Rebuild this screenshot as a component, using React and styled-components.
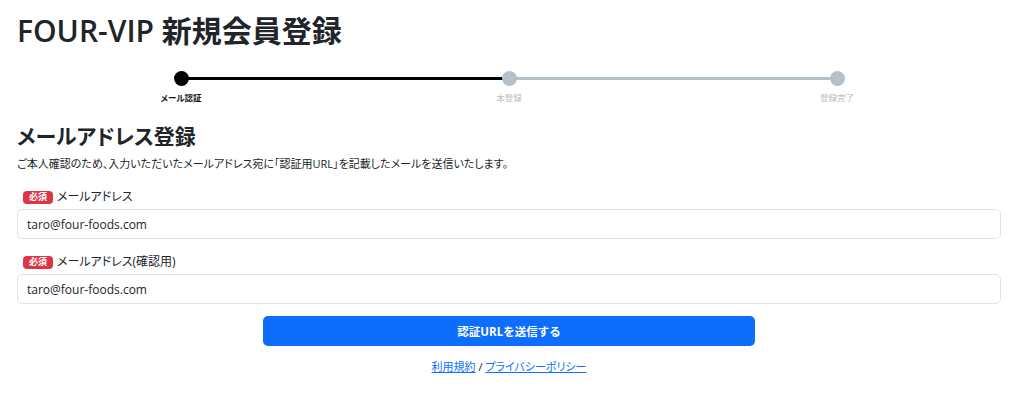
import React from "react";
import styled, { createGlobalStyle } from "styled-components";

const GlobalStyle = createGlobalStyle`
  body {
    margin: 0;
    background: #fff;
    color: #212529;
    font-family: "Open Sans", "Noto Sans CJK JP", sans-serif;
  }
`;

const Page = styled.div`
  width: 984px;
  padding: 0 0 0 17px;
  font-feature-settings: "palt";
`;

const Title = styled.h1`
  margin: 0;
  padding-top: 13px;
  font-size: 30px;
  font-weight: 600;
  line-height: 36px;
  color: #212529;
`;

const Stepper = styled.div`
  display: grid;
  grid-template-columns: repeat(3, 1fr);
  margin-top: 22px;
`;

const Step = styled.div`
  position: relative;
  display: flex;
  flex-direction: column;
  align-items: center;
`;

const Line = styled.div`
  position: absolute;
  top: 6px;
  left: 50%;
  width: 100%;
  height: 3px;
  background: ${p => (p.$done ? "#000" : "#b6c0c8")};
`;

const Dot = styled.div`
  position: relative;
  width: 15px;
  height: 15px;
  border-radius: 50%;
  background: ${p => (p.$active ? "#000" : "#b6c0c8")};
`;

const StepLabel = styled.div`
  margin-top: 6px;
  font-size: 8.5px;
  line-height: 12px;
  font-weight: ${p => (p.$active ? 700 : 400)};
  color: ${p => (p.$active ? "#111" : "#b6bcc2")};
`;

const Heading = styled.h2`
  margin: 17px 0 0;
  font-size: 21px;
  line-height: 30px;
  font-weight: 700;
`;

const Lead = styled.p`
  margin: 4px 0 0;
  font-size: 11px;
  line-height: 18px;
`;

const Field = styled.div`
  margin-top: ${p => p.$gap}px;
`;

const LabelRow = styled.div`
  display: flex;
  align-items: center;
  gap: 4px;
  padding-left: 6px;
  font-size: 12px;
  line-height: 18px;
`;

const Badge = styled.span`
  display: inline-flex;
  align-items: center;
  justify-content: center;
  width: 30px;
  height: 13px;
  border-radius: 4px;
  background: #dc3545;
  color: #fff;
  font-size: 9px;
  font-weight: 700;
`;

const Input = styled.input`
  box-sizing: border-box;
  display: block;
  width: 100%;
  height: 30px;
  margin-top: 3px;
  padding: 0 9px;
  border: 1px solid #dee2e6;
  border-radius: 5px;
  font-family: "Open Sans", "Noto Sans CJK JP", sans-serif;
  font-size: 12px;
  color: #212529;
  outline: none;
`;

const Actions = styled.div`
  display: flex;
  flex-direction: column;
  align-items: center;
  margin-top: 12px;
`;

const Submit = styled.button`
  width: 492px;
  height: 30px;
  border: 0;
  border-radius: 5px;
  background: #0d6efd;
  color: #fff;
  font-family: inherit;
  font-size: 11.5px;
  font-weight: 700;
`;

const Links = styled.div`
  margin-top: 12px;
  font-size: 11px;
  line-height: 18px;
  color: #212529;

  a {
    color: #0d6efd;
    text-decoration: underline;
  }
`;

const steps = [
  { label: "メール認証", active: true, done: true },
  { label: "本登録" },
  { label: "登録完了" }
];

const App = () => {
  return (
    <Page>
      <GlobalStyle />
      <Title>FOUR-VIP 新規会員登録</Title>
      <Stepper>
        {steps.map((s, i) => (
          <Step key={s.label}>
            {i < steps.length - 1 && <Line $done={s.done} />}
            <Dot $active={s.active} />
            <StepLabel $active={s.active}>{s.label}</StepLabel>
          </Step>
        ))}
      </Stepper>
      <Heading>メールアドレス登録</Heading>
      <Lead>
        ご本人確認のため、入力いただいたメールアドレス宛に「認証用URL」を記載したメールを送信いたします。
      </Lead>
      <Field $gap={15}>
        <LabelRow>
          <Badge>必須</Badge>
          メールアドレス
        </LabelRow>
        <Input defaultValue="taro@four-foods.com" />
      </Field>
      <Field $gap={14}>
        <LabelRow>
          <Badge>必須</Badge>
          メールアドレス(確認用)
        </LabelRow>
        <Input defaultValue="taro@four-foods.com" />
      </Field>
      <Actions>
        <Submit>認証URLを送信する</Submit>
        <Links>
          <a href="#">利用規約</a> / <a href="#">プライバシーポリシー</a>
        </Links>
      </Actions>
    </Page>
  );
};

export default App;
